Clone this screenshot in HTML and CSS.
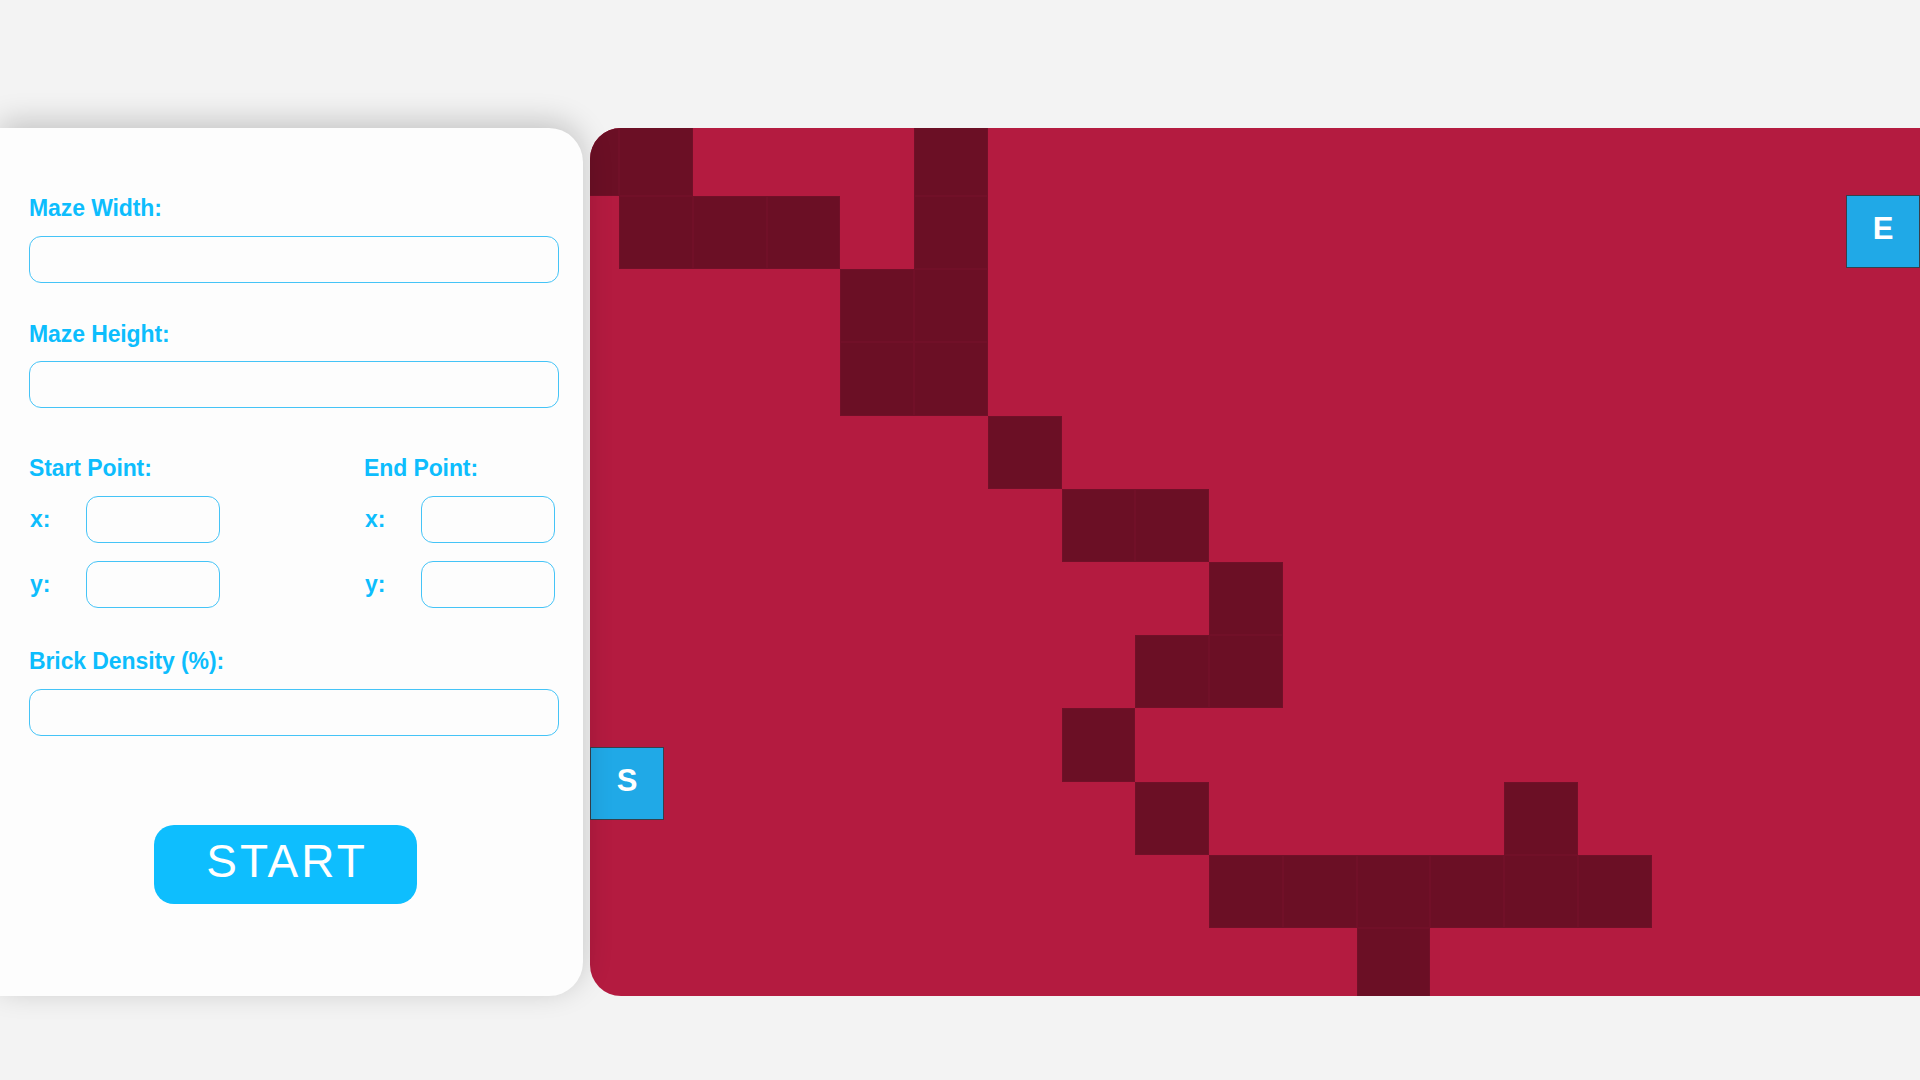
FILE: index.html
```html
<!DOCTYPE html>
<html lang="en">
<head>
<meta charset="utf-8">
<title>Maze Generator</title>
<link rel="stylesheet" href="styles.css">
</head>
<body>
<div class="app">
  <form class="panel">
    <div class="field">
      <label class="label">Maze Width:</label>
      <input class="input" type="text">
    </div>
    <div class="field">
      <label class="label">Maze Height:</label>
      <input class="input" type="text">
    </div>
    <div class="points">
      <div class="point">
        <label class="label">Start Point:</label>
        <div class="coord"><span class="coord-label">x:</span><input class="input small" type="text"></div>
        <div class="coord"><span class="coord-label">y:</span><input class="input small" type="text"></div>
      </div>
      <div class="point">
        <label class="label">End Point:</label>
        <div class="coord"><span class="coord-label">x:</span><input class="input small" type="text"></div>
        <div class="coord"><span class="coord-label">y:</span><input class="input small" type="text"></div>
      </div>
    </div>
    <div class="field density">
      <label class="label">Brick Density (%):</label>
      <input class="input" type="text">
    </div>
    <button class="start" type="button">START</button>
  </form>
  <div class="maze">
    <div class="grid">
      <div class="wall" style="grid-area:1/1"></div>
      <div class="wall" style="grid-area:1/2"></div>
      <div class="wall" style="grid-area:1/6"></div>
      <div class="wall" style="grid-area:2/2"></div>
      <div class="wall" style="grid-area:2/3"></div>
      <div class="wall" style="grid-area:2/4"></div>
      <div class="wall" style="grid-area:2/6"></div>
      <div class="wall" style="grid-area:3/5"></div>
      <div class="wall" style="grid-area:3/6"></div>
      <div class="wall" style="grid-area:4/5"></div>
      <div class="wall" style="grid-area:4/6"></div>
      <div class="wall" style="grid-area:5/7"></div>
      <div class="wall" style="grid-area:6/8"></div>
      <div class="wall" style="grid-area:6/9"></div>
      <div class="wall" style="grid-area:7/10"></div>
      <div class="wall" style="grid-area:8/9"></div>
      <div class="wall" style="grid-area:8/10"></div>
      <div class="wall" style="grid-area:9/8"></div>
      <div class="wall" style="grid-area:10/9"></div>
      <div class="wall" style="grid-area:10/14"></div>
      <div class="wall" style="grid-area:11/10"></div>
      <div class="wall" style="grid-area:11/11"></div>
      <div class="wall" style="grid-area:11/12"></div>
      <div class="wall" style="grid-area:11/13"></div>
      <div class="wall" style="grid-area:11/14"></div>
      <div class="wall" style="grid-area:11/15"></div>
      <div class="wall" style="grid-area:12/12"></div>
    </div>
    <div class="marker marker-start">S</div>
    <div class="marker marker-end">E</div>
  </div>
</div>
</body>
</html>
```
FILE: styles.css
```css
html, body {
  margin: 0;
  padding: 0;
}
body {
  background: #f3f3f3;
  font-family: "Liberation Sans", Arial, sans-serif;
  overflow: hidden;
  width: 1920px;
  height: 1080px;
}
.app {
  display: flex;
  gap: 7px;
  padding-top: 128px;
  width: 1920px;
  box-sizing: border-box;
}
.panel {
  flex: 0 0 583px;
  height: 868px;
  box-sizing: border-box;
  margin: 0;
  padding: 67px 24px 0 29px;
  background: #fdfdfd;
  border-radius: 0 34px 34px 0;
  box-shadow: 0 -6px 30px rgba(0, 0, 0, 0.2);
  position: relative;
  z-index: 1;
}
.label {
  display: block;
  font-weight: bold;
  font-size: 23px;
  line-height: 26px;
  color: #0dbdfd;
  margin-bottom: 14.5px;
  letter-spacing: -0.1px;
}
.field {
  margin-bottom: 38px;
}
.input {
  display: block;
  width: 100%;
  height: 47px;
  box-sizing: border-box;
  border: 1px solid #45c4f7;
  border-radius: 12px;
  background: transparent;
  outline: none;
  margin: 0;
  padding: 0 12px;
  font-family: inherit;
  font-size: 18px;
}
.points {
  display: grid;
  grid-template-columns: 335px 1fr;
  margin-top: 47px;
}
.point {
  display: flex;
  flex-direction: column;
  gap: 18px;
}
.point .label {
  margin-bottom: -3.5px;
}
.coord {
  display: flex;
  align-items: center;
}
.coord-label {
  flex: 0 0 57px;
  font-weight: bold;
  font-size: 23px;
  color: #0dbdfd;
  padding-left: 1px;
  box-sizing: border-box;
}
.input.small {
  width: 134px;
}
.density {
  margin-top: 40.5px;
}
.start {
  display: block;
  margin: 89.5px 0 0 125px;
  width: 263px;
  height: 79px;
  border: none;
  border-radius: 20px;
  background: #0ebefe;
  color: #ffffff;
  font-family: "Liberation Sans", Arial, sans-serif;
  font-size: 46px;
  letter-spacing: 3px;
  padding: 0 0 7px 3px;
  cursor: pointer;
}
.maze {
  flex: 0 0 1330px;
  height: 868px;
  position: relative;
  overflow: hidden;
  background: #b41b40;
  border-radius: 31px 0 0 31px;
}
.grid {
  display: grid;
  grid-template-columns: repeat(19, 73.75px);
  grid-template-rows: repeat(12, 73.2px);
  margin-left: -44.75px;
  margin-top: -5.2px;
}
.wall {
  background: #6b0f25;
  box-shadow: inset 0 0 0 1px rgba(125, 20, 46, 0.35);
}
.marker {
  position: absolute;
  width: 74px;
  height: 73px;
  box-sizing: border-box;
  background: #20a9e7;
  border: 1px solid #36404c;
  color: #ffffff;
  font-weight: bold;
  font-size: 31px;
  display: flex;
  align-items: center;
  justify-content: center;
  padding-bottom: 5px;
}
.marker-start {
  left: 0;
  top: 619px;
}
.marker-end {
  right: 0;
  top: 67px;
}
```
